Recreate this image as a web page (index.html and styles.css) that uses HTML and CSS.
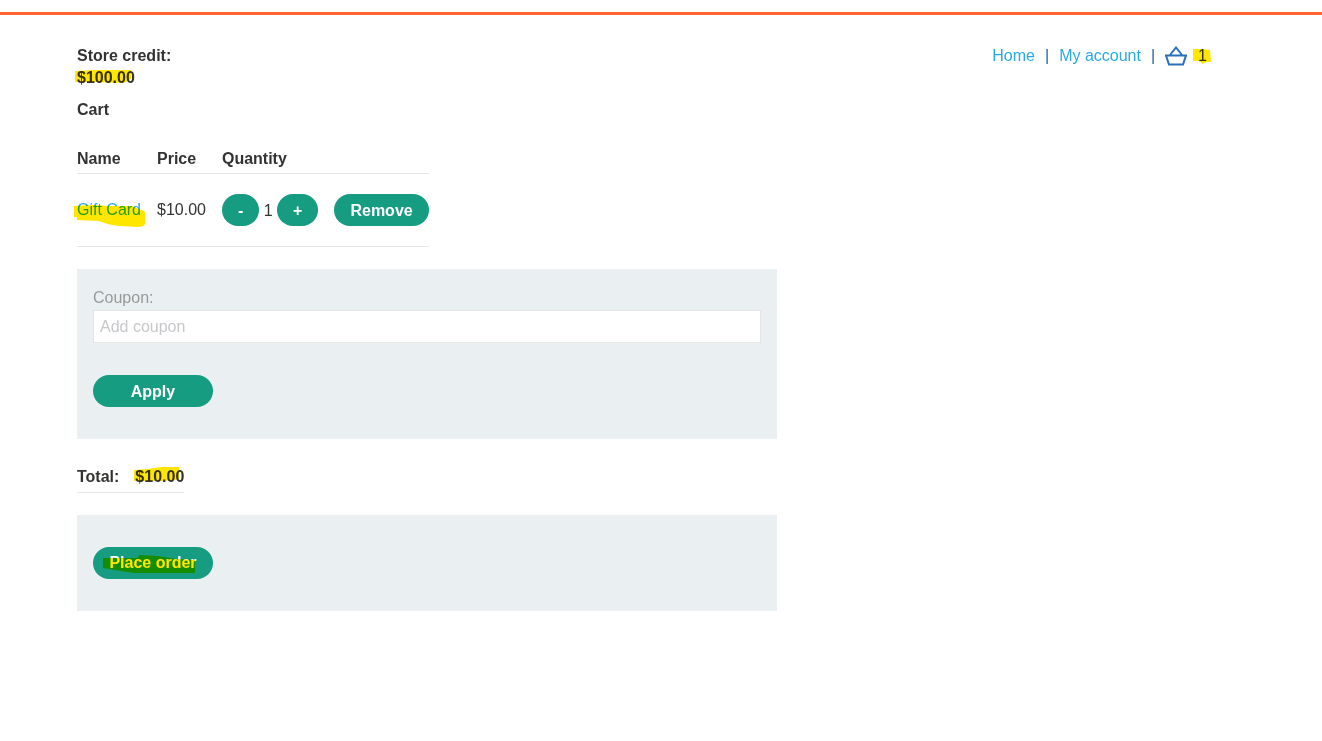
FILE: index.html
```html
<!DOCTYPE html>
<html lang="en">
<head>
<meta charset="utf-8">
<title>Cart</title>
<meta name="viewport" content="width=device-width, initial-scale=1">
<link rel="stylesheet" href="styles.css">
</head>
<body>
<div class="top-bar"></div>
<div class="container">
  <header class="header">
    <div class="credit">
      <div>Store credit:</div>
      <div><span class="marked">$100.00<svg class="marker marker-credit" width="57" height="13" viewBox="0 0 57 13" aria-hidden="true"><path d="M0 1L20 0 42 0 56 0V9L51 12 45 13 20 12 0 12Z"/></svg></span></div>
    </div>
    <nav class="nav">
      <a href="#">Home</a>
      <span class="divider">|</span>
      <a href="#">My account</a>
      <span class="divider">|</span>
      <a class="basket" href="#" aria-label="Basket"><svg width="22" height="20" viewBox="0 0 22 20" aria-hidden="true"><path d="M1 9.500H21L18 18.500H4ZM5 9L11 1.500 17 9"/></svg></a>
      <span class="marked">1<svg class="marker marker-count" width="18" height="15" viewBox="0 0 18 15" aria-hidden="true"><path d="M0 0H10L17 1 18 13 13 13 10 15 6 12H0Z"/></svg></span>
    </nav>
  </header>
  <main>
    <h1 class="title">Cart</h1>
    <table class="items">
      <thead>
        <tr><th>Name</th><th>Price</th><th>Quantity</th><th></th></tr>
      </thead>
      <tbody>
        <tr>
          <td><a class="marked" href="#">Gift Card<svg class="marker marker-item" width="72" height="22" viewBox="0 0 72 22" aria-hidden="true"><path d="M0 1L18 0 38 1 58 1 67 5Q71 5 71 8V19Q70 22 64 22L45 21Q34 20 25 16L3 15V12H0Z"/></svg></a></td>
          <td>$10.00</td>
          <td><button class="button" type="button" aria-label="Decrease quantity">-</button> 1 <button class="button" type="button" aria-label="Increase quantity">+</button></td>
          <td><button class="button" type="button">Remove</button></td>
        </tr>
      </tbody>
    </table>
    <form class="panel coupon">
      <label class="coupon-label" for="coupon">Coupon:</label>
      <input class="coupon-input" id="coupon" type="text" placeholder="Add coupon">
      <button class="button button-wide" type="button">Apply</button>
    </form>
    <table class="total">
      <tbody>
        <tr><th>Total:</th><th><span class="marked">$10.00<svg class="marker marker-total" width="46" height="15" viewBox="0 0 46 15" aria-hidden="true"><path d="M0 3L14 2 27 0H45V12L40 13 28 14 0 14Z"/></svg></span></th></tr>
      </tbody>
    </table>
    <form class="panel order">
      <button class="button button-wide" type="button"><span class="marked">Place order<svg class="marker marker-order" width="93" height="19" viewBox="0 0 93 19" aria-hidden="true"><path d="M0 3H35L36 0 55 1 74 4 92 5V18H31L18 16 0 13Z"/></svg></span></button>
    </form>
  </main>
</div>
</body>
</html>
```
FILE: styles.css
```css
* {
  box-sizing: border-box;
}

body {
  margin: 0;
  background: #fff;
  color: #333332;
  font: 16px/22px "Liberation Sans", Arial, sans-serif;
}

a {
  color: #29abe2;
  text-decoration: none;
}

.top-bar {
  height: 15px;
  border-bottom: 3px solid #ff6633;
}

.container {
  padding: 30px 115px 32px 77px;
}

.header {
  display: flex;
  justify-content: space-between;
  align-items: flex-start;
}

.credit {
  font-weight: bold;
}

.nav {
  display: flex;
  align-items: center;
  gap: 10px;
}

.divider {
  color: #1d5fa6;
}

.basket {
  display: flex;
  margin-right: 1px;
}

.basket svg {
  fill: none;
  stroke: #2a6fb8;
  stroke-width: 2;
}

.title {
  margin: 10px 0 22px;
  font-size: 16px;
  line-height: 22px;
}

.items,
.total {
  border-collapse: separate;
  border-spacing: 0;
}

.items th,
.items td,
.total th {
  padding: 5px 16px 3px 0;
  border-bottom: 1px solid #e4e4e4;
  text-align: left;
  white-space: nowrap;
}

.items td {
  padding: 20px 16px 20px 0;
}

.items th:last-child,
.items td:last-child,
.total th:last-child {
  padding-right: 0;
}

.total th {
  padding-bottom: 4px;
}

.button {
  height: 32px;
  padding: 2px 16px 0;
  border: 0;
  border-radius: 16px;
  background: #169c80;
  color: #fff;
  font: bold 16px/22px "Liberation Sans", Arial, sans-serif;
  cursor: pointer;
}

.button-wide {
  display: block;
  min-width: 120px;
}

.order .button {
  padding-top: 0;
}

.panel {
  max-width: 700px;
  margin: 22px 0;
  padding: 32px 16px;
  background: #eaf0f2;
}

.coupon {
  padding-top: 18px;
}

.coupon-label {
  display: block;
  margin-bottom: 1px;
  color: #999;
}

.coupon-input {
  display: block;
  width: 100%;
  height: 33px;
  margin-bottom: 32px;
  padding: 0 6px;
  border: 1px solid #e4e4e4;
  border-radius: 0;
  background: #fff;
  color: #333332;
  font: inherit;
}

.coupon-input::placeholder {
  color: #c8c8cc;
  opacity: 1;
}

.marked {
  position: relative;
}

.marker {
  position: absolute;
  fill: #ffe600;
  mix-blend-mode: multiply;
  pointer-events: none;
}

.marker-credit {
  top: 1px;
  left: -2px;
}

.marker-count {
  top: 4px;
  left: -5px;
}

.marker-item {
  top: 4px;
  left: -3px;
}

.marker-total {
  top: -1px;
  left: -1px;
}

.marker-order {
  top: 1px;
  left: -6px;
}
```
